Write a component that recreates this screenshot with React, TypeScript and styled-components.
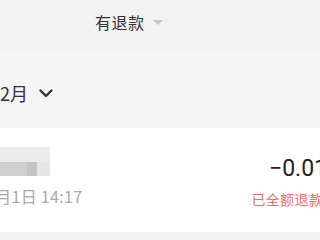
import React from 'react';
import styled, { createGlobalStyle } from 'styled-components';

const GlobalStyle = createGlobalStyle`
    html, body {
        margin: 0;
        padding: 0;
        background: #f2f2f2;
        overflow: hidden;
        font-family: "Noto Sans CJK SC", "Noto Sans", sans-serif;
    }
`;

export default function App() {
    return (
        <Page>
            <GlobalStyle />
            <FilterBar>
                <FilterLabel>有退款</FilterLabel>
                <Caret />
            </FilterBar>
            <MonthBar>
                <MonthLabel>2月</MonthLabel>
                <svg width="14" height="9" viewBox="0 0 14 9">
                    <path
                        d="M1.5 1.5 L7 7 L12.5 1.5"
                        fill="none"
                        stroke="#333"
                        strokeWidth="2.4"
                        strokeLinecap="round"
                        strokeLinejoin="round"
                    />
                </svg>
            </MonthBar>
            <RecordCard>
                <RecordInfo>
                    <BlurredName>
                        <BlurRow tone="#ececec" />
                        <BlurRow tone="#cfcfcf">
                            <BlurCell tone="#c4c4c4" />
                            <BlurCell tone="#e6e6e6" />
                        </BlurRow>
                    </BlurredName>
                    <RecordTime>2月1日 14:17</RecordTime>
                </RecordInfo>
                <RecordAmount>
                    <Amount>−0.01</Amount>
                    <Status>已全额退款</Status>
                </RecordAmount>
            </RecordCard>
        </Page>
    );
}

const Page = styled.div`
    width: 320px;
    height: 240px;
    overflow: hidden;
    display: flex;
    flex-direction: column;
    background: #f2f2f2;
`;

const FilterBar = styled.div`
    height: 50px;
    display: flex;
    align-items: center;
    padding-left: 95px;
    padding-bottom: 7px;
    box-sizing: border-box;
    background: #f2f2f2;
`;

const FilterLabel = styled.span`
    font-size: 16px;
    color: #333;
    letter-spacing: 0.5px;
`;

const Caret = styled.span`
    width: 0;
    height: 0;
    margin-left: 8px;
    margin-top: 2px;
    border-left: 5px solid transparent;
    border-right: 5px solid transparent;
    border-top: 5px solid #c6c6c6;
`;

const MonthBar = styled.div`
    height: 78px;
    display: flex;
    align-items: center;
    gap: 11px;
    padding-top: 8px;
    box-sizing: border-box;
    background: #f5f5f5;
`;

const MonthLabel = styled.span`
    font-size: 18px;
    color: #333;
`;

const RecordCard = styled.div`
    height: 104px;
    display: flex;
    justify-content: space-between;
    background: #fff;
`;

const RecordInfo = styled.div`
    display: flex;
    flex-direction: column;
    margin-left: -14px;
    padding-top: 19px;
`;

const BlurredName = styled.div`
    width: 64px;
    height: 29px;
    display: flex;
    flex-direction: column;
`;

const BlurRow = styled.div<{ tone: string }>`
    flex: 1;
    display: flex;
    justify-content: flex-end;
    background: ${(p) => p.tone};
`;

const BlurCell = styled.div<{ tone: string }>`
    width: 10px;
    background: ${(p) => p.tone};
    &:last-child {
        width: 13px;
    }
`;

const RecordTime = styled.span`
    margin-top: 8px;
    font-size: 16px;
    letter-spacing: 0.3px;
    color: #a8a8a8;
`;

const RecordAmount = styled.div`
    display: flex;
    flex-direction: column;
    align-items: flex-end;
    margin-right: -3px;
    padding-top: 29px;
`;

const Amount = styled.span`
    margin-right: -4px;
    font-family: "Roboto", "Noto Sans", sans-serif;
    font-size: 23px;
    line-height: 24px;
    color: #222;
`;

const Status = styled.span`
    margin-top: 8px;
    font-size: 14px;
    letter-spacing: 0.3px;
    color: #e8706c;
`;
